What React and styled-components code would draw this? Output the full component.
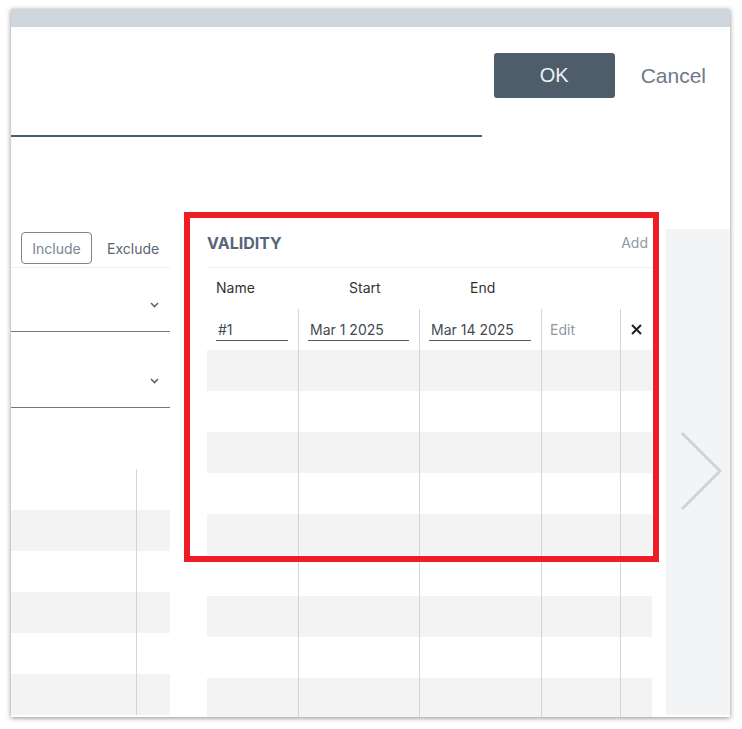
import React from 'react'
import styled, { createGlobalStyle } from 'styled-components'

const GlobalStyle = createGlobalStyle`
  html, body {
    margin: 0;
    padding: 0;
    background: #ffffff;
    font-family: Inter, "Noto Sans", Arial, sans-serif;
  }
`

const Page = styled.div`
  position: relative;
  width: 742px;
  height: 729px;
  padding: 9px 0 0 11px;
  box-sizing: border-box;
  overflow: hidden;
`

const Window = styled.div`
  width: 719px;
  height: 708px;
  background: #ffffff;
  box-shadow: 0 1px 5px rgba(0, 0, 0, 0.45);
  overflow: hidden;
  display: flex;
  flex-direction: column;

  & > * {
    flex: none;
  }
`

const TitleBar = styled.div`
  height: 18px;
  background: #cfd6dd;
`

const Actions = styled.div`
  display: flex;
  justify-content: flex-end;
  align-items: center;
  gap: 26px;
  padding: 26px 24px 0 0;
`

const OkButton = styled.button`
  width: 121px;
  height: 45px;
  border: none;
  border-radius: 3px;
  background: #4f5d6b;
  color: #eef0f2;
  font-family: "Liberation Sans", Arial, sans-serif;
  font-size: 20px;
`

const CancelLink = styled.span`
  color: #6e7a87;
  font-family: "Liberation Sans", Arial, sans-serif;
  font-size: 21px;
`

const FieldLine = styled.div`
  width: 471px;
  height: 2px;
  margin-top: 37px;
  background: #4f5d6b;
`

const Body = styled.div`
  display: flex;
  align-items: flex-start;
  margin-top: 92px;
`

const LeftPanel = styled.div`
  width: 159px;
  flex: none;
`

const ToggleRow = styled.div`
  height: 39px;
  display: flex;
  align-items: flex-start;
  gap: 15px;
  padding-left: 10px;
  padding-top: 3px;
  box-sizing: border-box;
  border-bottom: 1px solid #eef0f2;
`

const Toggle = styled.span`
  display: inline-flex;
  align-items: center;
  justify-content: center;
  height: 32px;
  box-sizing: border-box;
  font-size: 14px;
  color: ${p => (p.$active ? '#7a8594' : '#5a6573')};
  ${p => p.$active && `
    width: 71px;
    border: 1px solid #7a8594;
    border-radius: 4px;
  `}
`

const Dropdown = styled.div`
  height: ${p => p.$h}px;
  display: flex;
  align-items: flex-end;
  justify-content: flex-end;
  padding: 0 11px 23px 0;
  box-sizing: border-box;
  border-bottom: 1px solid #6b7785;
`

const Chevron = () => (
  <svg width="9" height="6" viewBox="0 0 9 6">
    <path d="M1 1l3.5 3.5L8 1" fill="none" stroke="#5a6573" strokeWidth="1.6" />
  </svg>
)

const LeftTable = styled.div`
  margin-top: 61px;
`

const LeftRow = styled.div`
  display: grid;
  grid-template-columns: 125px 34px;
  height: 41px;
  background: ${p => (p.$striped ? '#f3f3f3' : 'transparent')};
`

const Cell = styled.div`
  display: flex;
  align-items: center;
  border-left: ${p => (p.$line ? '1px solid #cdd8de' : 'none')};
  box-sizing: border-box;
  padding-left: ${p => p.$pl || 0}px;
  padding-right: ${p => p.$pr || 0}px;
  justify-content: ${p => p.$justify || 'flex-start'};
`

const Validity = styled.div`
  width: 445px;
  flex: none;
  margin-left: 37px;
`

const ValidityHeader = styled.div`
  height: 39px;
  display: flex;
  align-items: flex-start;
  justify-content: space-between;
  padding: 4px 4px 0 0;
  box-sizing: border-box;
  border-bottom: 1px solid #eef0f2;
`

const Title = styled.span`
  font-size: 16px;
  line-height: 20px;
  font-weight: 700;
  color: #566577;
`

const SmallLink = styled.span`
  font-size: 14px;
  line-height: 20px;
  color: #8e98a3;
`

const Grid = styled.div`
  display: grid;
  grid-template-columns: 91px 121px 122px 79px 32px;
  height: ${p => p.$h || 41}px;
  background: ${p => (p.$striped ? '#f3f3f3' : 'transparent')};
`

const HeadCell = styled.div`
  display: flex;
  align-items: center;
  padding-left: ${p => p.$pl}px;
  padding-bottom: 2px;
  font-size: 14px;
  color: #333333;
`

const Input = styled.div`
  width: 100%;
  height: 22px;
  display: flex;
  align-items: center;
  padding-left: 2px;
  box-sizing: border-box;
  border-bottom: 1px solid #4f5d6b;
  font-size: 14px;
  color: #444a52;
`

const Close = () => (
  <svg width="11" height="11" viewBox="0 0 11 11">
    <path d="M1 1l9 9M10 1l-9 9" stroke="#1e2226" strokeWidth="2" />
  </svg>
)

const Pager = styled.div`
  width: 64px;
  height: 486px;
  margin-left: 14px;
  flex: none;
  background: #f3f4f6;
  display: flex;
  align-items: flex-start;
  padding: 202px 0 0 14px;
  box-sizing: border-box;
`

const Annotation = styled.div`
  position: absolute;
  left: 184px;
  top: 212px;
  width: 475px;
  height: 350px;
  box-sizing: border-box;
  border: 6px solid #ee1d25;
  pointer-events: none;
`

const rows = Array.from({ length: 10 }, (_, i) => i)
const leftRows = Array.from({ length: 6 }, (_, i) => i)

export default function App() {
  return (
    <Page>
      <GlobalStyle />
      <Window>
        <TitleBar />
        <Actions>
          <OkButton>OK</OkButton>
          <CancelLink>Cancel</CancelLink>
        </Actions>
        <FieldLine />
        <Body>
          <LeftPanel>
            <ToggleRow>
              <Toggle $active>Include</Toggle>
              <Toggle>Exclude</Toggle>
            </ToggleRow>
            <Dropdown $h={64}><Chevron /></Dropdown>
            <Dropdown $h={76}><Chevron /></Dropdown>
            <LeftTable>
              {leftRows.map(i => (
                <LeftRow key={i} $striped={i % 2 === 1}>
                  <Cell />
                  <Cell $line />
                </LeftRow>
              ))}
            </LeftTable>
          </LeftPanel>

          <Validity>
            <ValidityHeader>
              <Title>VALIDITY</Title>
              <SmallLink>Add</SmallLink>
            </ValidityHeader>
            <Grid $h={41}>
              <HeadCell $pl={9}>Name</HeadCell>
              <HeadCell $pl={51}>Start</HeadCell>
              <HeadCell $pl={51}>End</HeadCell>
              <HeadCell />
              <HeadCell />
            </Grid>
            {rows.map(i => (
              <Grid key={i} $striped={i % 2 === 1}>
                {i === 0 ? (
                  <>
                    <Cell $pl={9} $pr={10}><Input>#1</Input></Cell>
                    <Cell $line $pl={9} $pr={10}><Input>Mar 1 2025</Input></Cell>
                    <Cell $line $pl={9} $pr={10}><Input>Mar 14 2025</Input></Cell>
                    <Cell $line $pl={8}><SmallLink>Edit</SmallLink></Cell>
                    <Cell $line $justify="center"><Close /></Cell>
                  </>
                ) : (
                  <>
                    <Cell />
                    <Cell $line />
                    <Cell $line />
                    <Cell $line />
                    <Cell $line />
                  </>
                )}
              </Grid>
            ))}
          </Validity>

          <Pager>
            <svg width="42" height="80" viewBox="0 0 42 80">
              <path d="M2 2l38 38L2 78" fill="none" stroke="#cfd3d6" strokeWidth="3" />
            </svg>
          </Pager>
        </Body>
      </Window>
      <Annotation />
    </Page>
  )
}
